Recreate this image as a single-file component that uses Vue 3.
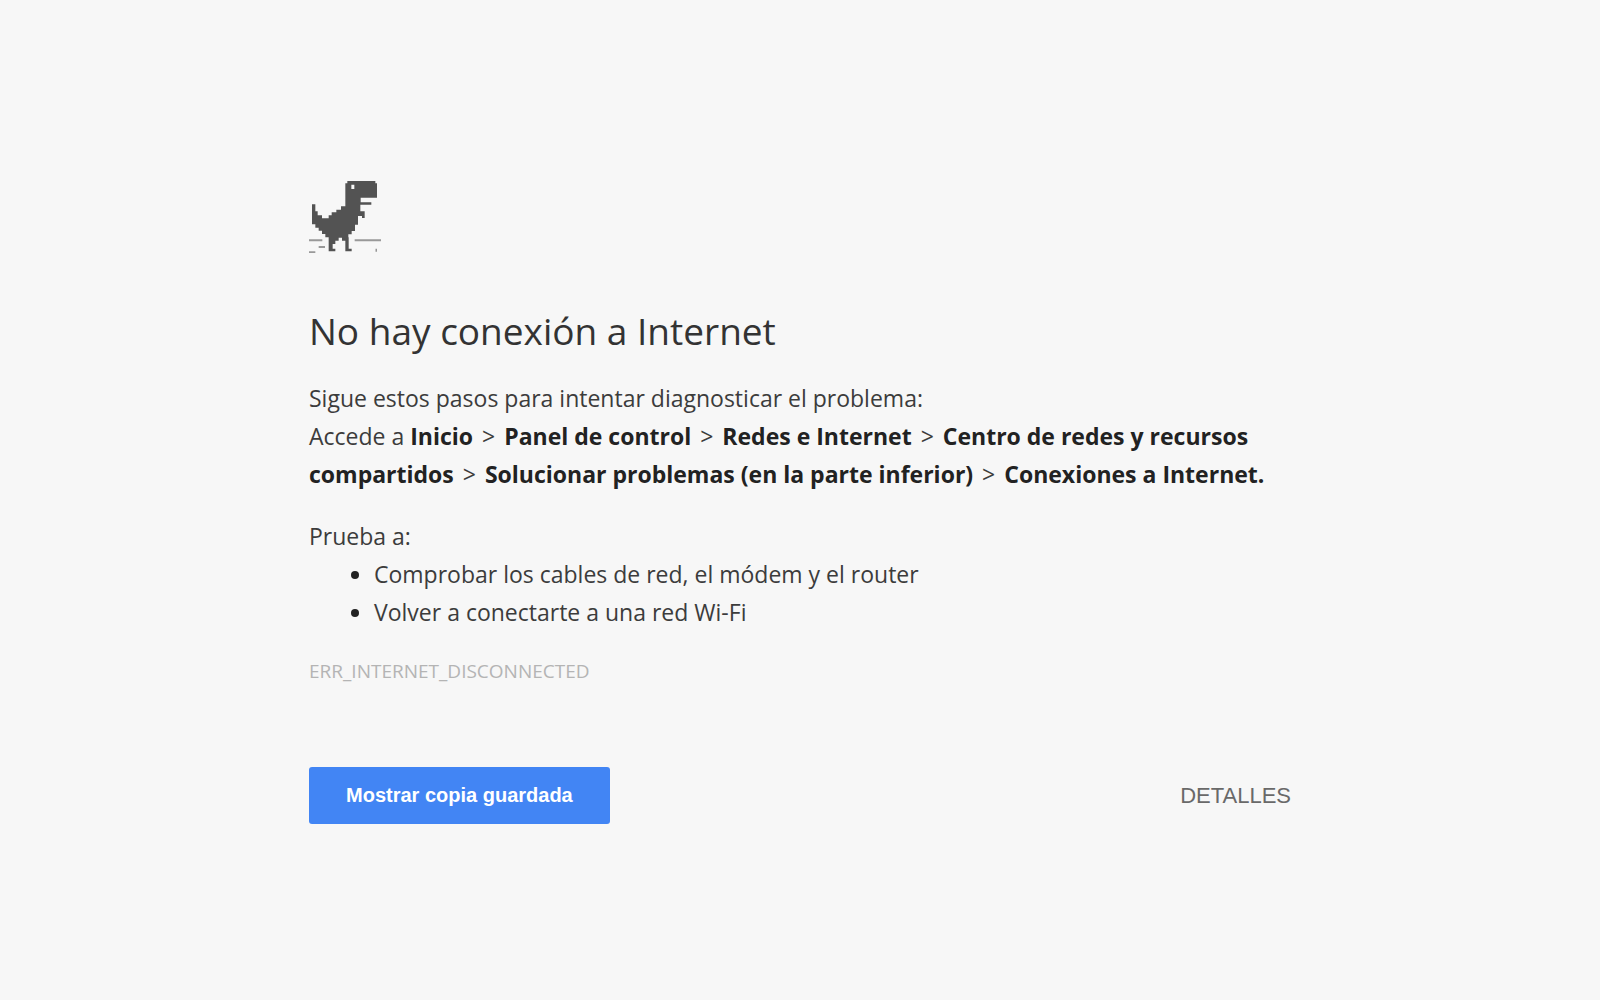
<script setup>
const route = [
  'Inicio',
  'Panel de control',
  'Redes e Internet',
  'Centro de redes y recursos compartidos',
  'Solucionar problemas (en la parte inferior)',
  'Conexiones a Internet.',
]
const tips = [
  'Comprobar los cables de red, el módem y el router',
  'Volver a conectarte a una red Wi-Fi',
]
</script>

<template>
  <main class="page">
    <svg class="dino" viewBox="28 32 216 216" aria-hidden="true">
      <path
        fill="#535353"
        fill-rule="evenodd"
        d="M143 32H227V39H232V82H183V96H215V103H182V123H195V143H187V137H175V163H166V182H156V192H146V201H147V235H156V243H137V211H127V202H117V211H107V221H99V235H107V243H87V201H77V191H67V181H57V172H47V162H37V102H47V123H54V135H67V144H87V135H96V126H110V118H124V108H137V39H143ZM155 43V56H164V43Z"
      />
      <path fill="#999" d="M28 207H68V213H28ZM165 207H244V213H165ZM57 227H76V233H57ZM28 243H47V248H28Z" />
      <path fill="#666" d="M228 235H231V244H228Z" />
    </svg>

    <h1>No hay conexión a Internet</h1>

    <p>Sigue estos pasos para intentar diagnosticar el problema:</p>
    <p>
      Accede a
      <template v-for="(step, i) in route" :key="step">
        <span v-if="i" class="sep">&gt;</span>
        {{ ' ' }}<strong>{{ step }}</strong>{{ ' ' }}
      </template>
    </p>

    <section class="tips">
      <p>Prueba a:</p>
      <ul>
        <li v-for="tip in tips" :key="tip">{{ tip }}</li>
      </ul>
    </section>

    <p class="code">ERR_INTERNET_DISCONNECTED</p>

    <div class="actions">
      <button type="button" class="primary">Mostrar copia guardada</button>
      <button type="button" class="details">DETALLES</button>
    </div>
  </main>
</template>

<style>
body {
  margin: 0;
  background: #f7f7f7;
}
</style>

<style scoped>
.page {
  box-sizing: border-box;
  max-width: 982px;
  margin: 0 auto;
  padding: 181px 0 48px;
  color: #3c3c3c;
  font: 23px/38px "Open Sans", "Noto Sans", sans-serif;
}

.dino {
  display: block;
  width: 72px;
  height: 72px;
}

h1 {
  margin: 50px 0 20px;
  color: #333;
  font-size: 37px;
  font-weight: 400;
  line-height: 56px;
}

p {
  margin: 0;
}

strong {
  color: #222;
  font-weight: 700;
}

.sep {
  margin: 0 3px;
}

.tips {
  margin-top: 24px;
}

ul {
  margin: 0;
  padding-left: 65px;
}

li::marker {
  color: #222;
}

.code {
  margin-top: 21px;
  color: #b4b4b4;
  font-size: 19px;
}

.actions {
  display: flex;
  align-items: center;
  justify-content: space-between;
  margin-top: 77px;
}

button {
  border: 0;
  font: 22px/25px "Liberation Sans", Arial, sans-serif;
  cursor: pointer;
}

.primary {
  padding: 16px 37px;
  border-radius: 3px;
  background: #4285f4;
  color: #fff;
  font-size: 20px;
  font-weight: 700;
}

.details {
  padding: 0;
  background: none;
  color: #696969;
}
</style>
